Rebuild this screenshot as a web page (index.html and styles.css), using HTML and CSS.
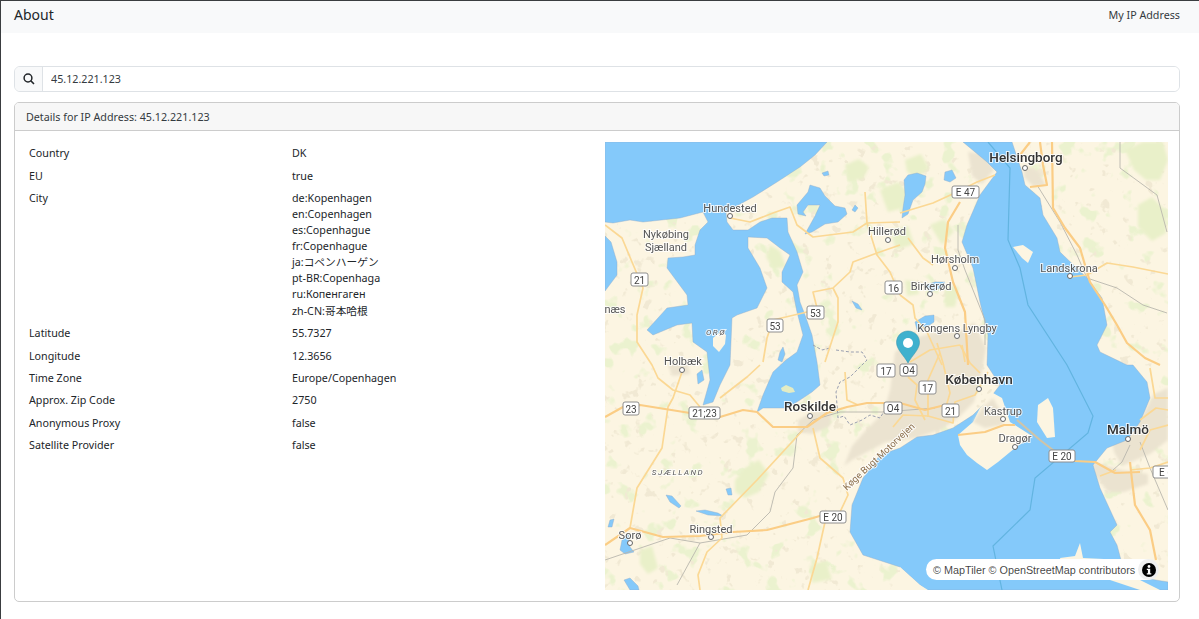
FILE: index.html
```html
<!DOCTYPE html>
<html lang="en">
<head>
<meta charset="utf-8">
<title>About</title>
<link rel="stylesheet" href="styles.css">
</head>
<body>
<nav class="topbar">
  <span class="brand">About</span>
  <a class="toplink">My IP Address</a>
</nav>
<main class="page">
  <div class="search">
    <span class="search-addon">
      <svg class="search-icon" viewBox="0 0 12 12" aria-hidden="true"><circle cx="5" cy="5" r="3.900"/><path d="M7.900 7.900L11 11"/></svg>
    </span>
    <input class="search-input" type="text" value="45.12.221.123">
  </div>
  <section class="card">
    <header class="card-header">Details for IP Address: 45.12.221.123</header>
    <div class="card-body">
      <table class="details">
        <tbody>
          <tr><td class="key">Country</td><td>DK</td></tr>
          <tr><td class="key">EU</td><td>true</td></tr>
          <tr>
            <td class="key">City</td>
            <td>
              <div>de:Kopenhagen</div>
              <div>en:Copenhagen</div>
              <div>es:Copenhague</div>
              <div>fr:Copenhague</div>
              <div>ja:コペンハーゲン</div>
              <div>pt-BR:Copenhaga</div>
              <div>ru:Копенгаген</div>
              <div>zh-CN:哥本哈根</div>
            </td>
          </tr>
          <tr><td class="key">Latitude</td><td>55.7327</td></tr>
          <tr><td class="key">Longitude</td><td>12.3656</td></tr>
          <tr><td class="key">Time Zone</td><td>Europe/Copenhagen</td></tr>
          <tr><td class="key">Approx. Zip Code</td><td>2750</td></tr>
          <tr><td class="key">Anonymous Proxy</td><td>false</td></tr>
          <tr><td class="key">Satellite Provider</td><td>false</td></tr>
        </tbody>
      </table>
      <div class="map">
        <svg class="map-svg" viewBox="605 142 563 448" aria-label="Map of Copenhagen region">
          <defs>
            <filter id="greenTex" x="0" y="0" width="100%" height="100%" color-interpolation-filters="sRGB">
              <feTurbulence type="fractalNoise" baseFrequency=".05" numOctaves="3" seed="7"/>
              <feColorMatrix values="0 0 0 0 .92  0 0 0 0 .95  0 0 0 0 .81  10 0 0 0 -6.100"/>
            </filter>
            <filter id="tanTex" x="0" y="0" width="100%" height="100%" color-interpolation-filters="sRGB">
              <feTurbulence type="fractalNoise" baseFrequency=".09" numOctaves="3" seed="21"/>
              <feColorMatrix values="0 0 0 0 .945  0 0 0 0 .915  0 0 0 0 .83  12 0 0 0 -7.900"/>
            </filter>
            <filter id="soft"><feGaussianBlur stdDeviation="1.500"/></filter>
          </defs>
          <rect class="land" x="605" y="142" width="563" height="448"/>
          <rect class="tex-green" x="605" y="142" width="563" height="448"/>
          <rect class="tex-tan" x="605" y="142" width="563" height="448"/>

          <!-- woodland regions -->
          <path class="green" d="M845 165l14-6 10 8-6 12-14 2zM880 190l18-8 10 10-4 16-16 4zM905 160l16-6 8 14-12 10-10-6zM890 230l18-4 6 18-18 6zM930 225l14-6 10 12-12 14zM905 280l12 2 2 12-12 2zM945 285l14 2-4 20-10 0zM770 245l10 6 6 16-12 2-8-12zM735 480l10-12 14-8 10 14-10 18-14 6-10-6zM1125 150l18-8 20 0 5 18-8 20-14 0-12-10zM1138 205l14-8 14 14 0 22-14 8-14-14zM640 550l12-4 6 22-10 6-8-10zM810 565l16-4 6 18-20 4z"/>

          <!-- urban areas -->
          <path class="urban" d="M895 352l20-14 20-6 25 0 14-10 12 26-4 24-8 30-16 16-18 12-24 8-30 4-34 18-8 6 8-20 14-16 18-18 6-22zM798 420l14-8 20 0-2 14-18 8-14-2zM968 152l18 2 8 16-12 14-10-8zM1024 165l14 6 8 14-12 2-10-10zM1112 442l28-22 14-26 14-6 0 52-18 14-28 12-8-14zM668 364l20 0 2 10-18 2zM1092 462l30 8 26 4 0 10-24 8-16 0-14-18z"/>

          <!-- water -->
          <path class="water" d="M605 142L827 142L815 155L800 167L777 182L753 197L733 208L726 213L727 222L733 230L748 230L760 222L772 218L787 218L788 232L797 252L803 272L797 285L800 302L805 315L812 335L817 362L820 385L812 392L800 400L787 408L763 408L757 412L763 395L773 372L786 360L797 352L803 335L797 312L793 292L782 282L782 272L790 255L780 248L767 238L748 237L748 248L760 268L767 288L757 308L737 315L732 318L730 365L720 385L713 402L703 405L710 380L707 352L693 342L692 323L677 325L653 335L647 330L658 318L667 308L688 305L687 295L667 268L668 258L683 257L695 255L695 245L700 230L708 222L703 212L680 218L643 222L630 220L613 223L605 222Z"/>
          <path class="land" d="M713 338l8-7 5 4-1 9-6 8-6-6z"/>
          <path class="islet" d="M781 388l5-3 7 3 2 4-6 1-7-2z"/>
          <path class="water" d="M605 236L611 242L617 262L617 275L605 291Z"/>
          <path class="water" d="M963 142L1012 142L1022 172L1025 185L1040 198L1043 215L1057 238L1060 252L1087 278L1102 298L1107 325L1097 345L1100 352L1127 365L1133 365L1147 382L1150 398L1140 422L1127 440L1107 448L1093 465L1100 488L1117 525L1110 532L1117 545L1125 575L1168 582L1168 590L927 590L920 585L900 567L863 555L850 532L852 505L863 478L880 455L900 448L917 437L933 435L953 428L973 415L990 398L1000 385L987 365L988 335L980 302L973 268L962 242L967 225L980 195L997 172L987 162Z"/>
          <path class="land" d="M1060 558L1075 556L1080 543L1083 558L1125 560L1130 575L1160 590L1140 590L1110 580L1065 575Z"/>
          <path class="land" d="M900 590L900 567L920 585L928 590Z"/>
          <path class="land" d="M958 435L973 422L980 408L993 393L1002 398L1010 422L1032 436L1015 448L998 462L987 470L977 463L967 455L960 445Z"/>
          <path class="urban" d="M973 422L982 408L993 398L1000 410L1003 425L985 428Z"/>
          <path class="land" d="M1038 405L1048 398L1053 408L1055 437L1047 438L1037 422Z"/>
          <path class="land" d="M1013 247L1023 245L1033 252L1028 263L1022 258Z"/>

          <!-- lakes -->
          <path class="water" d="M797 205L808 192L810 185L820 188L825 196L835 206L845 208L847 214L838 222L825 224L812 232L805 234L815 216L820 205L808 205L803 212L806 216L798 214Z"/>
          <path class="water" d="M904 180L908 175L917 173L926 176L925 184L922 192L913 200L908 214L902 218L903 208L905 195Z"/>
          <path class="water" d="M945 172L952 170L956 178L950 182L944 180Z"/>
          <path class="water" d="M855 205L858 208L855 212L852 210Z"/>
          <path class="water" d="M822 173L828 171L829 175L824 176Z"/>
          <path class="water" d="M852 301L858 304L862 310L856 308Z"/>
          <path class="water" d="M915 322L925 316L934 315L934 322L925 328L917 330Z"/>
          <path class="water" d="M925 285L935 282L945 282L943 287L930 292Z"/>
          <path class="water" d="M780 352L783 347L785 354L782 362L778 360Z"/>
          <path class="water" d="M666 495L672 496L681 506L679 508L670 502Z"/>
          <path class="water" d="M696 511L705 510L718 513L723 516L708 515Z"/>
          <path class="water" d="M726 489L731 488L732 495L728 495Z"/>
          <path class="water" d="M610 520L614 519L612 527L608 527Z"/>
          <path class="water" d="M622 540L628 533L630 547L634 552L625 554L620 550Z"/>
          <path class="water" d="M624 580L630 578L638 586L639 590L630 590Z"/>
          <path class="water" d="M697 374L702 370L704 380L698 384Z"/>

          <!-- sea borders -->
          <path class="border" d="M988 142L1010 168L1008 240L1020 268L1028 305L1067 365L1093 416L1088 433L1035 478L1030 510L993 546L1002 590"/>
          <path class="muni" d="M836 350L850 352L862 352L867 360L857 370L850 377L840 382L836 392L838 418L844 416L850 425L862 420L870 415L880 418L885 410"/>
          <path class="muni" d="M813 345L822 350L830 348"/>

          <!-- railways -->
          <path class="rail" d="M605 560L670 538L700 543L747 535L770 512L775 492L793 468L797 435L813 420L840 412L883 412L935 408"/>
          <path class="rail" d="M700 543L677 585"/>
          <path class="rail" d="M1037 185L1060 222L1077 255L1087 278L1117 288L1143 305L1167 313"/>
          <path class="rail" d="M1120 142L1120 168L1157 195L1167 232"/>
          <path class="rail" d="M1140 442L1150 468L1168 510M1113 470L1122 462L1130 445"/>
          <path class="rail" d="M958 225L958 250L965 270L985 320L985 345"/>
          <path class="bridge" d="M1017 420L1040 440L1062 457"/>

          <!-- roads -->
          <g class="road">
            <path d="M605 225L622 238L632 262L643 288L637 315L637 342L652 365L658 378L673 390L690 395L700 407"/>
            <path d="M682 372L673 398L668 407L662 448L637 488L630 528"/>
            <path d="M730 218L750 222L773 213L790 207L797 225L813 237L853 232L867 223L900 222M865 192L867 223L877 255L890 272L900 295"/>
            <path d="M900 245L877 253L853 262L850 272L833 288L813 292L818 312M833 288L838 298L838 322L825 362"/>
            <path d="M807 312L773 320L767 338L763 362"/>
            <path d="M720 398L747 377L760 365"/>
            <path d="M813 428L820 458L843 478L848 495L840 512M825 522L817 558L808 590"/>
            <path d="M803 430L757 480L720 518L722 538L707 552L698 575L700 590"/>
            <path d="M908 238L923 258L933 265M900 295L913 305L915 318L927 332L942 365"/>
            <path d="M1070 277L1087 275L1107 263L1133 267L1168 274"/>
            <path d="M900 213L933 203L957 192L977 182L995 175"/>
            <path d="M845 372L847 400L858 405"/>
            <path d="M910 362L930 350L960 345M937 343L943 363M960 345L970 363L980 373"/>
            <path d="M940 353L928 380L928 417M908 377L917 385L915 400L925 420M943 363L950 393L945 410"/>
            <path d="M893 427L903 415L928 416L953 423L955 402L975 395L988 372M962 345L965 362"/>
            <path d="M1130 470L1150 468L1168 462M1140 450L1150 430L1168 425M1140 420L1156 408L1168 410M1150 368L1155 398L1168 398M1100 476L1116 470"/>
          </g>
          <g class="motorway">
            <path d="M605 417L623 407L640 405L690 413L720 417L743 410L757 412L773 427L807 427L827 413L847 407L867 403L900 403L925 410L945 405"/>
            <path d="M605 545L630 528L663 537L700 536L733 532L767 530L813 518L823 515"/>
            <path d="M1052 142L1053 208L1065 228L1080 248L1090 282L1105 305L1117 325L1127 343L1145 358L1160 365"/>
            <path d="M960 202L948 222L945 248L953 282L965 312L968 365"/>
            <path d="M1030 142L1020 155M1040 142L1043 165L1047 185L1030 187"/>
            <path d="M958 435L985 432L1004 425L1015 425"/>
            <path d="M1062 458L1075 461L1095 462L1115 473L1140 472"/>
            <path d="M1130 462L1132 480L1135 505L1150 530L1156 560"/>
          </g>

          <!-- shields -->
          <g class="shields">
            <g><rect x="631" y="273" width="17" height="13"/><text x="639.500" y="283.500">21</text></g>
            <g><rect x="767" y="319" width="16" height="13"/><text x="775" y="329.500">53</text></g>
            <g><rect x="807" y="306" width="17" height="13"/><text x="815.500" y="316.500">53</text></g>
            <g><rect x="885" y="281" width="17" height="13"/><text x="893.500" y="291.500">16</text></g>
            <g><rect x="952" y="186" width="27" height="12"/><text x="965.500" y="196">E 47</text></g>
            <g><rect x="877" y="364" width="18" height="13"/><text x="886" y="374.500">17</text></g>
            <g><rect x="900" y="364" width="17" height="12"/><text x="908.500" y="374">O4</text></g>
            <g><rect x="919" y="381" width="17" height="13"/><text x="927.500" y="391.500">17</text></g>
            <g><rect x="884" y="402" width="18" height="12"/><text x="893" y="412">O4</text></g>
            <g><rect x="942" y="404" width="17" height="13"/><text x="950.500" y="414.500">21</text></g>
            <g><rect x="623" y="402" width="16" height="13"/><text x="631" y="412.500">23</text></g>
            <g><rect x="689" y="407" width="31" height="12"/><text x="704.500" y="417">21;23</text></g>
            <g><rect x="820" y="511" width="26" height="12"/><text x="833" y="521">E 20</text></g>
            <g><rect x="1049" y="450" width="26" height="12"/><text x="1062" y="460">E 20</text></g>
            <g><rect x="1153" y="466" width="26" height="12"/><text x="1166" y="476">E 6</text></g>
          </g>

          <!-- places -->
          <g class="dots">
            <circle cx="730" cy="216" r="2.500"/>
            <circle cx="888" cy="240" r="2.500"/>
            <circle cx="955" cy="268" r="2.500"/>
            <circle cx="930" cy="294" r="2.500"/>
            <circle cx="1025" cy="168" r="2.500"/>
            <circle cx="1070" cy="276" r="2.500"/>
            <circle cx="957" cy="336" r="2.500"/>
            <circle cx="682" cy="370" r="2.500"/>
            <circle cx="979" cy="389" r="2.500"/>
            <circle cx="810" cy="416" r="2.500"/>
            <circle cx="1003" cy="419" r="2.500"/>
            <circle cx="1015" cy="447" r="2.500"/>
            <circle cx="1128" cy="439" r="2.500"/>
            <circle cx="711" cy="537" r="2.500"/>
            <circle cx="630" cy="543" r="2.500"/>
          </g>
          <g class="labels">
            <text class="big" x="1026" y="162">Helsingborg</text>
            <text class="big" x="979" y="384">København</text>
            <text class="big" x="810" y="411">Roskilde</text>
            <text class="big" x="1128" y="434">Malmö</text>
            <text x="730" y="212">Hundested</text>
            <text x="666" y="238">Nykøbing</text>
            <text x="666" y="251">Sjælland</text>
            <text x="887" y="235">Hillerød</text>
            <text x="955" y="263">Hørsholm</text>
            <text x="931" y="290">Birkerød</text>
            <text x="1069" y="272">Landskrona</text>
            <text x="957" y="332">Kongens Lyngby</text>
            <text x="683" y="365">Holbæk</text>
            <text x="1003" y="415">Kastrup</text>
            <text x="1015" y="442">Dragør</text>
            <text x="711" y="533">Ringsted</text>
            <text x="630" y="539">Sorø</text>
            <text x="615" y="313">næs</text>
            <text class="region" x="716" y="335">ORØ</text>
            <text class="region" x="678" y="475">SJÆLLAND</text>
            <text class="curved" transform="translate(881 459) rotate(-43)">Køge Bugt Motorvejen</text>
          </g>
          <!-- marker -->
          <g class="marker">
            <path d="M908 331c-6.500 0-11.500 5-11.500 11.500 0 7 7.500 13 11.500 20.500 4-7.500 11.500-13.500 11.500-20.500 0-6.500-5-11.500-11.500-11.500z"/>
            <circle cx="908" cy="343" r="5"/>
          </g>
        </svg>
        <div class="attribution">
          <span class="attribution-text">© MapTiler © OpenStreetMap contributors</span>
          <span class="info-button">
            <svg viewBox="0 0 14 14" class="info-icon" aria-hidden="true"><circle cx="7" cy="7" r="7"/><circle class="info-mark" cx="7" cy="3.500" r="1.400"/><path class="info-mark" d="M4.800 5.800H8.200V10.300H9.300V11.500H4.800V10.300H5.900V7H4.800z"/></svg>
          </span>
        </div>
      </div>
    </div>
  </section>
</main>
</body>
</html>
```

FILE: styles.css
```css
* { box-sizing: border-box; }

html, body { height: 100%; }

body {
  margin: 0;
  border-top: 1px solid #3a3d40;
  border-left: 1px solid #3a3d40;
  background: #fff;
  color: #212529;
  font-family: "Noto Sans", "Noto Sans CJK JP", sans-serif;
  font-size: 10.720px;
  line-height: 16px;
  overflow: hidden;
}

.topbar {
  display: flex;
  justify-content: space-between;
  align-items: center;
  height: 32px;
  padding: 0 19px 4px 13px;
  background: #f8f9fa;
}

.brand { font-size: 14px; color: #212529; }
.toplink { color: #343a40; }

.page { padding: 33px 19px 0 13px; }

.search {
  display: flex;
  height: 26px;
  border: 1px solid #dee2e6;
  border-radius: 6px;
  overflow: hidden;
}

.search-addon {
  display: flex;
  align-items: center;
  justify-content: center;
  width: 28px;
  flex: none;
  background: #f8f9fa;
  border-right: 1px solid #dee2e6;
}

.search-icon { width: 12px; height: 12px; fill: none; stroke: #212529; stroke-width: 1.500; }

.search-input {
  flex: 1;
  border: 0;
  outline: 0;
  padding: 0 8px;
  font: inherit;
  color: #343a40;
  background: #fff;
}

.card {
  margin-top: 10px;
  height: 500px;
  border: 1px solid #ccc;
  border-radius: 5px;
  overflow: hidden;
}

.card-header {
  height: 28px;
  padding: 5.500px 11px;
  background: #f7f7f7;
  border-bottom: 1px solid #ccc;
  color: #343a40;
}

.card-body {
  display: flex;
  justify-content: space-between;
  padding: 11px 11px 0;
}

.details {
  width: 567px;
  height: 0;
  border-collapse: collapse;
  table-layout: fixed;
  align-self: flex-start;
  line-height: 1.5;
  margin-top: -.200px;
}

.details td {
  padding: 3.216px 3px;
  vertical-align: top;
}

.details .key { width: 263px; }

.map {
  position: relative;
  width: 563px;
  height: 448px;
  flex: none;
  overflow: hidden;
}

.map-svg { display: block; width: 563px; height: 448px; filter: blur(.35px); }

.land { fill: #fcf5e2; }
.islet { fill: #e3ecc4; }
.tex-green { filter: url(#greenTex); }
.tex-tan { filter: url(#tanTex); }
.green { fill: #e9f0c9; filter: url(#soft); }
.urban { fill: #ebe3d0; filter: url(#soft); }
.water { fill: #84c9fa; stroke: #8fa9c4; stroke-width: .4; }
.border { fill: none; stroke: #62b4e0; stroke-width: 1.200; }
.muni { fill: none; stroke: #9a9fb0; stroke-width: 1; stroke-dasharray: 3 2; }
.rail { fill: none; stroke: #b9b7ae; stroke-width: .9; }
.bridge { fill: none; stroke: #cfc4a8; stroke-width: 2.200; }
.road path { fill: none; stroke: #fbd894; stroke-width: 1.700; stroke-linejoin: round; }
.motorway path { fill: none; stroke: #fbcd85; stroke-width: 2.200; stroke-linejoin: round; }

.shields rect { fill: #fff; stroke: #8e8e8e; stroke-width: 1; rx: 2px; }
.shields text {
  fill: #444;
  font-family: Roboto, sans-serif;
  font-size: 10px;
  text-anchor: middle;
}

.dots circle { fill: #fff; stroke: #666; stroke-width: 1; }

.labels text {
  fill: #555;
  font-family: Roboto, sans-serif;
  font-size: 11px;
  text-anchor: middle;
  stroke: rgba(255, 255, 255, .8);
  stroke-width: 2px;
  paint-order: stroke;
}

.labels .big { fill: #333; font-size: 13.500px; font-weight: 500; }
.labels .region { font-size: 8px; font-style: italic; letter-spacing: 1.500px; }
.labels .curved { fill: #8c6f4c; font-size: 9.500px; }

.marker path { fill: #3fb1ce; stroke: #2f8fa8; stroke-width: .5; }
.marker circle { fill: #fff; }

.attribution {
  position: absolute;
  right: 10px;
  bottom: 10px;
  display: flex;
  align-items: center;
  height: 21px;
  width: 232px;
  padding-left: 7px;
  background: #fff;
  border-radius: 11px;
  font-family: "Liberation Sans", Arial, sans-serif;
  font-size: 10.800px;
  color: rgba(0, 0, 0, .75);
  white-space: nowrap;
}

.info-button {
  position: absolute;
  right: -1px;
  top: 0;
  display: flex;
  align-items: center;
  justify-content: center;
  width: 21px;
  height: 21px;
  border-radius: 50%;
  background: #f0f0f0;
}

.info-icon { width: 14px; height: 14px; fill: #000; }
.info-mark { fill: #fff; }
```
